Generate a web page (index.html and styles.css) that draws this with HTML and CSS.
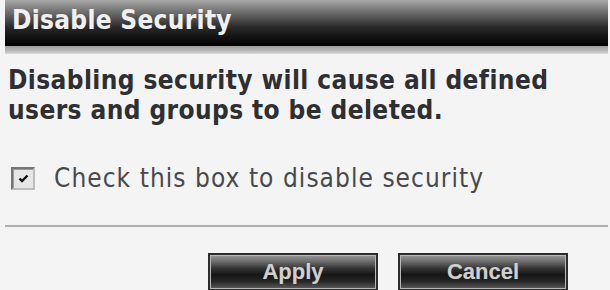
FILE: index.html
```html
<!DOCTYPE html>
<html>
<head>
<meta charset="utf-8">
<title>Disable Security</title>
<link rel="stylesheet" href="styles.css">
</head>
<body>
<div class="dialog">
  <div class="titlebar"><h1 class="title">Disable Security</h1></div>
  <div class="band"></div>
  <div class="content">
    <p class="msg">Disabling security will cause all defined users and groups to be deleted.</p>
    <label class="check">
      <span class="box"><svg width="11" height="9" viewBox="0 0 11 9"><path d="M1.5 4.5 L4 7 L9.5 1.5" fill="none" stroke="#111" stroke-width="2.4"/></svg></span>
      <span class="check-text">Check this box to disable security</span>
    </label>
  </div>
  <div class="sep"></div>
  <div class="buttons">
    <button class="btn">Apply</button>
    <button class="btn">Cancel</button>
  </div>
</div>
</body>
</html>
```
FILE: styles.css
```css
html, body {
  margin: 0;
  padding: 0;
  background: #f4f4f4;
}
body {
  width: 610px;
  height: 290px;
  overflow: hidden;
  font-family: "DejaVu Sans Condensed", "DejaVu Sans", sans-serif;
}
.dialog {
  display: flex;
  flex-direction: column;
}
.titlebar {
  margin: 0 2px 0 5px;
  height: 46px;
  background: linear-gradient(#a8a8a8 0, #828282 8px, #575757 17px, #2a2a2a 27px, #151515 36px, #0a0a0a 42px, #000 44px, #000 46px);
  display: flex;
  align-items: flex-start;
}
.title {
  margin: 0;
  padding: 5px 0 0 7px;
  font-size: 26px;
  line-height: 30px;
  font-weight: bold;
  letter-spacing: 0.3px;
  color: #f0f0f0;
}
.band {
  margin: 0 2px 0 5px;
  height: 8px;
  background: linear-gradient(#9c9c9c, #b9b9b9 60%, #dadada);
}
.content {
  padding: 11px 0 0 8px;
}
.msg {
  margin: 0;
  font-size: 26px;
  line-height: 30px;
  font-weight: bold;
  letter-spacing: 0.4px;
  color: #2e2f33;
}
.check {
  margin-top: 38px;
  display: flex;
  align-items: center;
  gap: 19px;
  padding-left: 3px;
}
.box {
  width: 20px;
  height: 19px;
  border-style: solid;
  border-width: 2px;
  border-color: #767676 #bdbdbd #bdbdbd #767676;
  background: #e6e6e6;
  box-shadow: inset 1px 1px 0 #9a9a9a;
  display: flex;
  align-items: center;
  justify-content: center;
}
.check-text {
  font-size: 26px;
  line-height: 30px;
  letter-spacing: 1.05px;
  color: #48494c;
}
.sep {
  margin: 32px 2px 0 5px;
  height: 2px;
  background: #aeaeae;
}
.buttons {
  display: flex;
  justify-content: flex-end;
  gap: 20px;
  padding: 26px 42px 0 0;
}
.btn {
  width: 170px;
  height: 38px;
  padding: 0;
  border: 2px solid #2c2c2c;
  box-shadow: inset 0 0 0 1px #b8b8b8;
  background: linear-gradient(#9a9a9a 0, #6a6a6a 20%, #333 40%, #161616 58%, #262626 78%, #5e5e5e 100%);
  font-family: "Liberation Sans", Arial, sans-serif;
  font-weight: bold;
  font-size: 22px;
  color: #cfcfcf;
  text-shadow: 0 0 1px #555;
}
```
